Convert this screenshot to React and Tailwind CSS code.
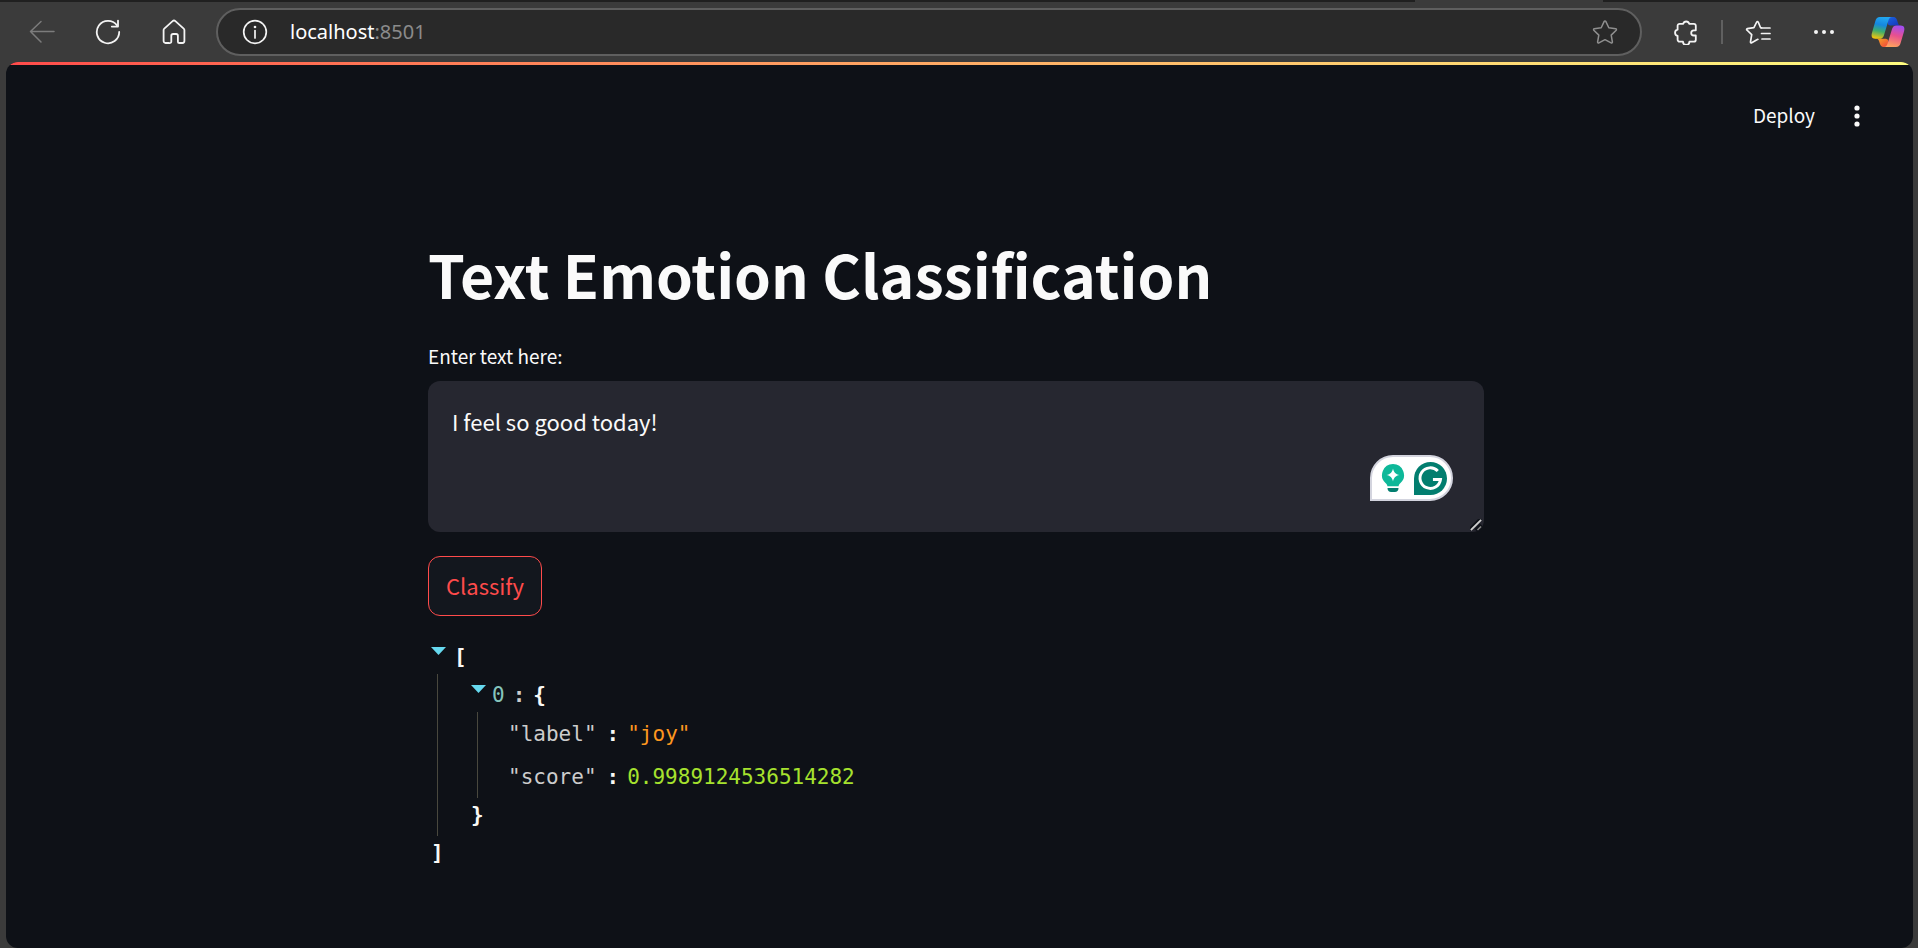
import { useState } from "react";

function ToolbarButton({ label, disabled, className = "w-[66px]", children }) {
  return (
    <button
      type="button"
      aria-label={label}
      disabled={disabled}
      className={`flex h-12 shrink-0 items-center justify-center ${className}`}
    >
      {children}
    </button>
  );
}

function BackIcon() {
  return (
    <svg width="26" height="26" viewBox="0 0 26 26" fill="none" stroke="#7c7c7c" strokeWidth="1.5" strokeLinecap="round" strokeLinejoin="round">
      <path d="M25 12.5H1.5M12 2.5 1.5 12.5 12 23" />
    </svg>
  );
}

function ReloadIcon() {
  return (
    <svg width="26" height="26" viewBox="0 0 26 26" fill="none" stroke="#f4f4f4" strokeWidth="1.8" strokeLinecap="round" strokeLinejoin="round">
      <path d="M24.2 13A11.2 11.2 0 1 1 22 6.4" />
      <path d="M23 1.6v6h-6.2" />
    </svg>
  );
}

function HomeIcon() {
  return (
    <svg width="26" height="26" viewBox="0 0 26 26" fill="none" stroke="#f4f4f4" strokeWidth="1.8" strokeLinejoin="round">
      <path d="M11.6 2.2a2 2 0 0 1 2.8 0l8.3 7.4a2 2 0 0 1 .7 1.5v11a1.9 1.9 0 0 1-1.9 1.9h-3a1.6 1.6 0 0 1-1.6-1.6v-5.6a1.8 1.8 0 0 0-1.8-1.8h-3a1.8 1.8 0 0 0-1.8 1.8v5.600A1.600 1.600 0 0 1 8 24H4.500a1.900 1.900 0 0 1-1.900-1.900v-11a2 2 0 0 1 .7-1.500z" />
    </svg>
  );
}

function InfoIcon() {
  return (
    <svg width="26" height="26" viewBox="0 0 26 26" fill="none" stroke="#f4f4f4" strokeWidth="1.7">
      <circle cx="13" cy="13" r="11.3" />
      <path d="M13 11.5v7.5" strokeLinecap="round" />
      <circle cx="13" cy="8" r="1.3" fill="#f4f4f4" stroke="none" />
    </svg>
  );
}

function StarIcon() {
  return (
    <svg width="26" height="26" viewBox="0 0 26 26" fill="none" stroke="#8f8f8f" strokeWidth="1.5" strokeLinejoin="round">
      <path d="M12.200 2.400a.9.9 0 0 1 1.600 0l3 6.300 6.900 1a.9.9 0 0 1 .5 1.500l-5 4.900 1.200 6.900a.9.9 0 0 1-1.300.9L13 20.700l-6.100 3.200a.9.9 0 0 1-1.300-.9l1.200-6.900-5-4.900a.9.9 0 0 1 .5-1.500l6.900-1z" />
    </svg>
  );
}

function PuzzleIcon() {
  return (
    <svg width="26" height="26" viewBox="0 0 26 26" fill="none" stroke="#f4f4f4" strokeWidth="1.8" strokeLinejoin="round">
      <path d="M6.600 4.800h3.600a3.100 3.100 0 0 1 6 0h4.600a2 2 0 0 1 2 2v4.500h-2a2.600 2.600 0 0 0 0 5.200h2v4.200a2 2 0 0 1-2 2h-4.400a3.200 3.200 0 0 1-6.400 0H6.600a2 2 0 0 1-2-2v-3.900a3.100 3.100 0 0 1 0-6.100V6.800a2 2 0 0 1 2-2z" />
    </svg>
  );
}

function FavoritesIcon() {
  return (
    <svg width="26" height="26" viewBox="0 0 26 26" fill="none" stroke="#f4f4f4" strokeWidth="1.7" strokeLinecap="round" strokeLinejoin="round">
      <path d="M16.500 8.900l-.9-.1-2.400-5.800a.8.8 0 0 0-1.500 0L8.900 8.700l-6.600.9a.8.8 0 0 0-.4 1.400l4.800 4.600-1.200 7.300a.8.8 0 0 0 1.200.8l5.200-2.900 1-.5" />
      <path d="M17 9h8M16.500 14.500H25M17 20h8" />
    </svg>
  );
}

function CopilotIcon() {
  return (
    <svg width="34" height="32" viewBox="0 0 34 32">
      <defs>
        <linearGradient id="cp-left" x1="0.5" y1="0" x2="0.3" y2="1">
          <stop offset="0" stopColor="#22a7f0" />
          <stop offset="0.35" stopColor="#1587e0" />
          <stop offset="0.65" stopColor="#3fae6c" />
          <stop offset="1" stopColor="#f6c50c" />
        </linearGradient>
        <linearGradient id="cp-right" x1="0.6" y1="0" x2="0.35" y2="1">
          <stop offset="0" stopColor="#a24df0" />
          <stop offset="0.45" stopColor="#e8508f" />
          <stop offset="1" stopColor="#ffa45c" />
        </linearGradient>
        <linearGradient id="cp-top" x1="0" y1="0" x2="1" y2="1">
          <stop offset="0" stopColor="#1a63e0" />
          <stop offset="1" stopColor="#1533b8" />
        </linearGradient>
        <linearGradient id="cp-bottom" x1="0" y1="0" x2="1" y2="1">
          <stop offset="0" stopColor="#f5a623" />
          <stop offset="1" stopColor="#f0433c" />
        </linearGradient>
      </defs>
      <path d="M17 1h5.500c2 0 3 1.300 3.600 3.200l1 3.300c.4 1.300 1.200 2 2.400 2H19l-2-1z" fill="url(#cp-top)" />
      <path d="M17 31h-4.500c-2 0-3-1.300-3.600-3.200l-1-3c-.4-1.300-1.200-2-2.400-2H15l2 1z" fill="url(#cp-bottom)" />
      <path d="M9 1h12c-2 0-2.900 1.300-3.500 3.200l-4.600 15.200c-.7 2.300-2.200 3.400-4.400 3.400H4.200C.7 22.800 0 20 1 16.800L4.300 5.200C5.100 2.300 6.500 1 9 1z" fill="url(#cp-left)" />
      <path d="M25 31H13c2 0 2.900-1.300 3.500-3.200l4.600-15c.7-2.300 2.200-3.400 4.400-3.400h4.300c3.500 0 4.200 2.800 3.200 6l-3.300 11.400C28.900 29.700 27.500 31 25 31z" fill="url(#cp-right)" />
    </svg>
  );
}

function BrowserBar() {
  return (
    <header className="bg-[#3b3b3b]">
      <div className="flex h-[2px] bg-[#202020]">
        <div className="ml-auto mr-[315px] w-[188px] bg-[#3b3b3b]" />
      </div>
      <nav aria-label="Browser" className="flex h-[60px] items-center pl-[9px]">
        <ToolbarButton label="Back" disabled><BackIcon /></ToolbarButton>
        <ToolbarButton label="Refresh"><ReloadIcon /></ToolbarButton>
        <ToolbarButton label="Home"><HomeIcon /></ToolbarButton>
        <div className="ml-[9px] mr-[11px] flex h-12 min-w-0 flex-1 items-center rounded-full border-2 border-[#5f5f5f] bg-[#292929] pl-6 pr-[22px]">
          <button type="button" aria-label="Site information"><InfoIcon /></button>
          <span className="ml-[22px] flex-1 font-['Noto_Sans',sans-serif] text-xl text-white">
            localhost<span className="text-[#8b8b8b]">:8501</span>
          </span>
          <button type="button" aria-label="Add to favorites"><StarIcon /></button>
        </div>
        <ToolbarButton label="Extensions"><PuzzleIcon /></ToolbarButton>
        <div className="mx-[2px] h-6 w-[2px] bg-[#606060]" />
        <ToolbarButton label="Favorites"><FavoritesIcon /></ToolbarButton>
        <ToolbarButton label="Settings and more">
          <svg width="22" height="6" viewBox="0 0 22 6" fill="#f4f4f4">
            <circle cx="3" cy="3" r="2" />
            <circle cx="11" cy="3" r="2" />
            <circle cx="19" cy="3" r="2" />
          </svg>
        </ToolbarButton>
        <ToolbarButton label="Copilot" className="w-[61px]"><CopilotIcon /></ToolbarButton>
      </nav>
    </header>
  );
}

function GrammarlyBadge() {
  return (
    <div className="absolute right-[31px] top-[74px] flex h-[46px] w-[83px] items-center justify-between rounded-full rounded-bl-none border-2 border-[#d3d4de] bg-white pl-[9px] pr-1">
      <svg width="24" height="30" viewBox="0 0 24 30">
        <path d="M12 1a11 11 0 0 0-7.500 19c1.200 1.100 1.700 2 1.900 3.200h11.200c.2-1.200.7-2.100 1.900-3.200A11 11 0 0 0 12 1z" fill="#0db899" />
        <path d="M6.500 25h11c0 2.600-1.400 4-3.600 4h-3.800c-2.200 0-3.600-1.400-3.600-4z" fill="#027e6f" />
        <path d="M12 5.500c.9 4 2.500 5.600 6.500 6.500-4 .9-5.600 2.500-6.500 6.500-.9-4-2.500-5.600-6.500-6.500 4-.9 5.600-2.500 6.500-6.500z" fill="#fff" />
      </svg>
      <svg width="33" height="33" viewBox="0 0 34 34" fill="none">
        <path d="M17 0a17 17 0 0 1 0 34H0V17A17 17 0 0 1 17 0z" fill="#027e6f" />
        <path d="M24.500 9.300A10.600 10.600 0 1 0 27.300 18H19.500" stroke="#fff" strokeWidth="3" />
      </svg>
    </div>
  );
}

function ResizeGrip() {
  return (
    <svg width="12" height="12" viewBox="0 0 12 12" className="pointer-events-none absolute bottom-[1px] right-[2px]" fill="none" strokeLinecap="square">
      <path d="M1 9.500 9.500 1M7 10l3-3" stroke="#0e1117" strokeWidth="3.5" />
      <path d="M1.500 10.500 10.500 1.500" stroke="#d0d0d0" strokeWidth="1.8" />
      <path d="M8 10.500l2.500-2.500" stroke="#8a8a8a" strokeWidth="1.5" />
    </svg>
  );
}

function Caret() {
  return (
    <svg width="15" height="8" viewBox="0 0 15 8" className="mt-[7px] shrink-0 self-start">
      <path d="M0 0h15L7.500 8z" fill="#66d9ef" />
    </svg>
  );
}

function JsonEntry({ name, children }) {
  return (
    <div className="flex h-[43px] items-center">
      <span className="text-[#cccccc]">"{name}"</span>
      <span className="ml-[10px] mr-2 font-bold">:</span>
      {children}
    </div>
  );
}

function JsonView({ results }) {
  return (
    <div className="font-['DejaVu_Sans_Mono',monospace] text-[21px] leading-[34px] text-[#f9f8f5]">
      <div className="flex h-[38px] items-center pl-[3px] pt-1">
        <Caret />
        <span className="ml-2 font-bold">[</span>
      </div>
      <div className="ml-[9px] border-l border-[#49483e] pl-[33px]">
        {results.map((item, i) => (
          <div key={i}>
            <div className="flex h-[38px] items-center pt-1">
              <Caret />
              <span className="ml-[6px] text-[#85c4bc]">{i}</span>
              <span className="mx-2 font-bold text-[#cccccc]">:</span>
              <span className="font-bold">{"{"}</span>
            </div>
            <div className="ml-[6px] border-l border-[#49483e] pl-[30px]">
              <JsonEntry name="label"><span className="text-[#fd971f]">"{item.label}"</span></JsonEntry>
              <JsonEntry name="score"><span className="text-[#a6e22e]">{item.score}</span></JsonEntry>
            </div>
            <div className="h-[38px] font-bold">{"}"}</div>
          </div>
        ))}
      </div>
      <div className="h-[38px] pl-[3px] font-bold">]</div>
    </div>
  );
}

export default function App() {
  const [text, setText] = useState("I feel so good today!");
  return (
    <div className="flex min-h-screen flex-col bg-[#3b3b3b]">
      <BrowserBar />
      <div className="ml-[6px] mr-[5px] flex flex-1 flex-col overflow-hidden rounded-xl bg-[#0e1117] font-['Noto_Sans_CJK_JP',sans-serif] text-[#fafafa]">
        <div className="h-[3px] bg-linear-to-r from-[#ff4b4b] to-[#fffd80]" />
        <div className="flex items-center justify-end gap-[39px] pr-[53px] pt-[35px]">
          <button type="button" className="pb-[2px] text-[19px] leading-[30px]">Deploy</button>
          <button type="button" aria-label="Main menu">
            <svg width="6" height="22" viewBox="0 0 6 22" fill="#fafafa">
              <circle cx="3" cy="3" r="2.6" />
              <circle cx="3" cy="11" r="2.6" />
              <circle cx="3" cy="19" r="2.6" />
            </svg>
          </button>
        </div>
        <main className="flex flex-col pr-[7px] pt-[102px]">
          <div className="mx-auto w-full max-w-[1056px]">
            <h1 className="text-[59px] font-bold leading-[80px]">Text Emotion Classification</h1>
            <label htmlFor="input-text" className="mt-[27px] block pb-[2px] text-[19px] leading-[30px]">Enter text here:</label>
            <div className="relative mt-2">
              <textarea
                id="input-text"
                value={text}
                spellCheck={false}
                onChange={(e) => setText(e.target.value)}
                className="block h-[151px] w-full resize-y rounded-xl bg-[#262730] px-6 py-[22px] text-[22px] leading-9 outline-none [&::-webkit-resizer]:hidden"
              />
              <ResizeGrip />
              <GrammarlyBadge />
            </div>
            <button type="button" className="mt-6 block h-[60px] rounded-xl border border-[#ff4b4b] bg-[#13171e] px-[17px] pb-[3px] text-[22px] leading-8 text-[#ff4b4b]">
              Classify
            </button>
            <div className="mt-5">
              <JsonView results={[{ label: "joy", score: "0.9989124536514282" }]} />
            </div>
          </div>
        </main>
      </div>
    </div>
  );
}
